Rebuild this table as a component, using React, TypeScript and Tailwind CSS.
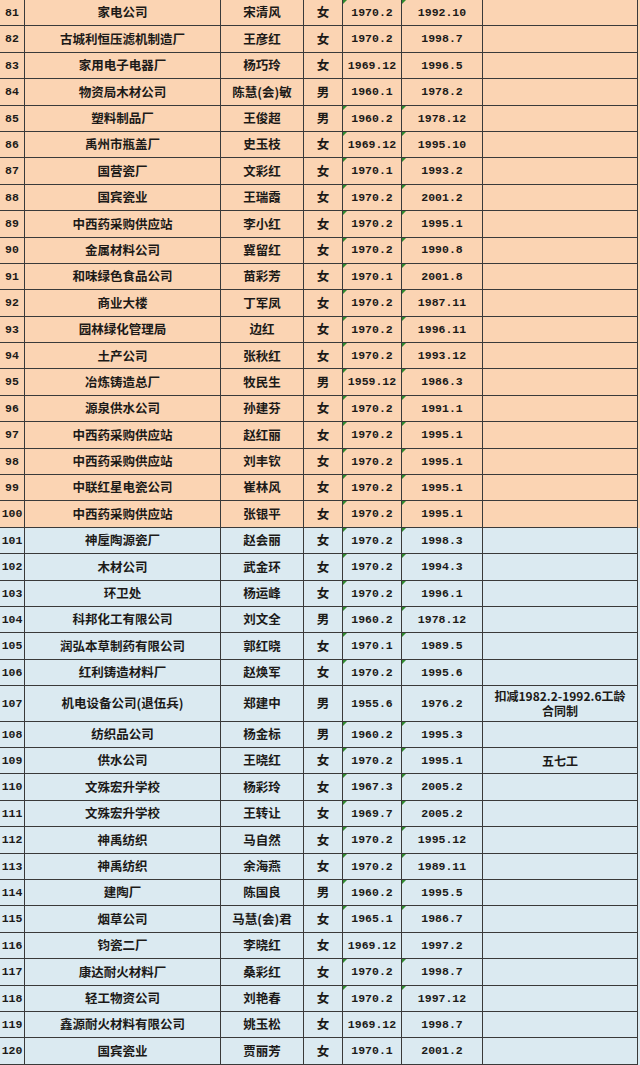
type Row = {
  no: number;
  unit: string;
  name: string;
  sex: string;
  born: string;
  work: string;
  note?: React.ReactNode;
  flag?: boolean;
};

const raw: [number, string, string, string, string, string][] = [
  [81, "家电公司", "宋清风", "女", "1970.2", "1992.10"],
  [82, "古城利恒压滤机制造厂", "王彦红", "女", "1970.2", "1998.7"],
  [83, "家用电子电器厂", "杨巧玲", "女", "1969.12", "1996.5"],
  [84, "物资局木材公司", "陈慧(会)敏", "男", "1960.1", "1978.2"],
  [85, "塑料制品厂", "王俊超", "男", "1960.2", "1978.12"],
  [86, "禹州市瓶盖厂", "史玉枝", "女", "1969.12", "1995.10"],
  [87, "国营瓷厂", "文彩红", "女", "1970.1", "1993.2"],
  [88, "国宾瓷业", "王瑞霞", "女", "1970.2", "2001.2"],
  [89, "中西药采购供应站", "李小红", "女", "1970.2", "1995.1"],
  [90, "金属材料公司", "冀留红", "女", "1970.2", "1990.8"],
  [91, "和味绿色食品公司", "苗彩芳", "女", "1970.1", "2001.8"],
  [92, "商业大楼", "丁军凤", "女", "1970.2", "1987.11"],
  [93, "园林绿化管理局", "边红", "女", "1970.2", "1996.11"],
  [94, "土产公司", "张秋红", "女", "1970.2", "1993.12"],
  [95, "冶炼铸造总厂", "牧民生", "男", "1959.12", "1986.3"],
  [96, "源泉供水公司", "孙建芬", "女", "1970.2", "1991.1"],
  [97, "中西药采购供应站", "赵红丽", "女", "1970.2", "1995.1"],
  [98, "中西药采购供应站", "刘丰钦", "女", "1970.2", "1995.1"],
  [99, "中联红星电瓷公司", "崔林风", "女", "1970.2", "1995.1"],
  [100, "中西药采购供应站", "张银平", "女", "1970.2", "1995.1"],
  [101, "神垕陶源瓷厂", "赵会丽", "女", "1970.2", "1998.3"],
  [102, "木材公司", "武金环", "女", "1970.2", "1994.3"],
  [103, "环卫处", "杨运峰", "女", "1970.2", "1996.1"],
  [104, "科邦化工有限公司", "刘文全", "男", "1960.2", "1978.12"],
  [105, "润弘本草制药有限公司", "郭红晓", "女", "1970.1", "1989.5"],
  [106, "红利铸造材料厂", "赵焕军", "女", "1970.2", "1995.6"],
  [107, "机电设备公司(退伍兵)", "郑建中", "男", "1955.6", "1976.2"],
  [108, "纺织品公司", "杨金标", "男", "1960.2", "1995.3"],
  [109, "供水公司", "王晓红", "女", "1970.2", "1995.1"],
  [110, "文殊宏升学校", "杨彩玲", "女", "1967.3", "2005.2"],
  [111, "文殊宏升学校", "王转让", "女", "1969.7", "2005.2"],
  [112, "神禹纺织", "马自然", "女", "1970.2", "1995.12"],
  [113, "神禹纺织", "余海燕", "女", "1970.2", "1989.11"],
  [114, "建陶厂", "陈国良", "男", "1960.2", "1995.5"],
  [115, "烟草公司", "马慧(会)君", "女", "1965.1", "1986.7"],
  [116, "钧瓷二厂", "李晓红", "女", "1969.12", "1997.2"],
  [117, "康达耐火材料厂", "桑彩红", "女", "1970.2", "1998.7"],
  [118, "轻工物资公司", "刘艳春", "女", "1970.2", "1997.12"],
  [119, "鑫源耐火材料有限公司", "姚玉松", "女", "1969.12", "1998.7"],
  [120, "国宾瓷业", "贾丽芳", "女", "1970.1", "2001.2"],
];

const noFlag = [82, 83, 84, 107, 116, 119, 120];

const rows: Row[] = raw.map(([no, unit, name, sex, born, work]) => ({
  no,
  unit,
  name,
  sex,
  born,
  work,
  flag: !noFlag.includes(no),
  note:
    no === 107 ? (
      <>
        <span className="block">扣减1982.2-1992.6工龄</span>
        <span className="block">合同制</span>
      </>
    ) : no === 109 ? (
      "五七工"
    ) : undefined,
}));

const cjk = "font-['Noto_Sans_CJK_SC',sans-serif] text-[12.5px] font-semibold";
const num = "font-['Liberation_Mono',monospace] text-[11.5px] font-bold";
const cell = "flex items-center justify-center border-r border-[#3a3a3a] text-center leading-none text-[#1c1a18]";

function Flag() {
  return (
    <span className="absolute left-0 top-0 h-0 w-0 border-r-[4px] border-t-[4px] border-r-transparent border-t-[#2f8a2f]" />
  );
}

function TableRow({ row }: { row: Row }) {
  const bg = row.no <= 100 ? "bg-[#fbd4b3]" : "bg-[#dbeaf1]";
  const height = row.no === 107 ? "h-[35.5px]" : "h-[26.4px]";
  return (
    <div className={`w-full ${bg} ${height}`}>
      <div className="grid h-full w-[638px] grid-cols-[25px_196px_83px_39px_59px_81px_155px] border-b border-[#3a3a3a]">
        <div className={`${cell} ${num}`}>{row.no}</div>
        <div className={`${cell} ${cjk}`}>{row.unit}</div>
        <div className={`${cell} ${cjk}`}>{row.name}</div>
        <div className={`${cell} ${cjk}`}>{row.sex}</div>
        <div className={`${cell} ${num} relative`}>
          {row.flag && <Flag />}
          {row.born}
        </div>
        <div className={`${cell} ${num} relative`}>
          {row.flag && <Flag />}
          {row.work}
        </div>
        <div className={`${cell} ${cjk} flex-col gap-[3px] text-[12px]`}>{row.note}</div>
      </div>
    </div>
  );
}

export default function App() {
  return (
    <div className="h-[1065px] w-[640px] overflow-hidden bg-[#dbeaf1]">
      {rows.map((row) => (
        <TableRow key={row.no} row={row} />
      ))}
    </div>
  );
}
